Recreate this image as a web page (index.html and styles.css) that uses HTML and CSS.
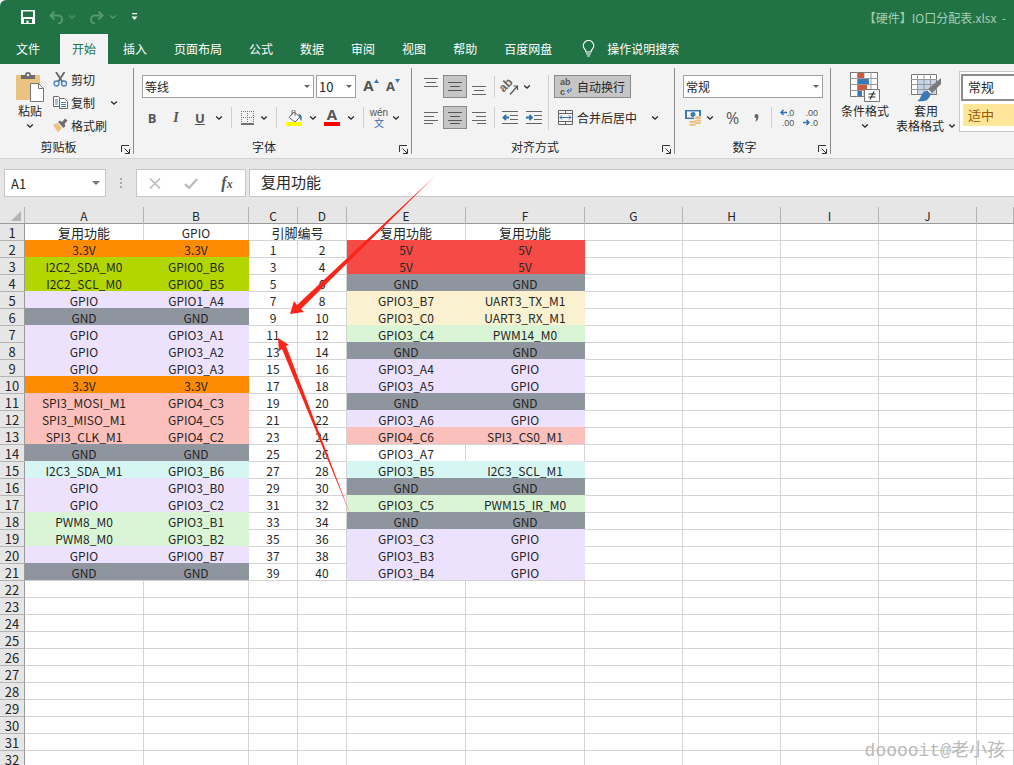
FILE: index.html
```html
<!DOCTYPE html>
<html lang="zh-CN">
<head>
    <meta charset="UTF-8">
    <meta name="viewport" content="width=device-width, initial-scale=1.0">
    <title>【硬件】IO口分配表.xlsx</title>
    <link rel="stylesheet" href="styles.css">
</head>
<body>
    <!-- Shared icons -->
    <svg class="defs" width="0" height="0">
        <symbol id="chev" viewBox="0 0 8 6"><path d="M1.2 1.5 4 4.2 6.800 1.500" fill="none" stroke="currentColor" stroke-width="1.300"/></symbol>
        <symbol id="launch" viewBox="0 0 9 9"><path d="M.5 7V.5H8M3.500 3.500 8 8M8.500 4v4.500H4" fill="none" stroke="#333"/></symbol>
    </svg>

    <header class="top">
        <div class="titlebar">
            <button class="qa" aria-label="保存"><svg width="14" height="14" viewBox="0 0 14 14"><path d="M0 0h14v14H0z" fill="#fff"/><path d="M2 1.500h10V7H2zM3 9h8v4H7.500v-2.500H5.500V13H3z" fill="#217346"/></svg></button>
            <button class="qa dim undo" aria-label="撤消"><svg width="14" height="13" viewBox="0 0 14 13"><path d="M5.500.5 1.500 4.500l4 4M1.500 4.500H9a4 4 0 0 1 0 8" fill="none" stroke="currentColor" stroke-width="2"/></svg><svg width="8" height="6"><use href="#chev"/></svg></button>
            <button class="qa dim" aria-label="恢复"><svg width="14" height="13" viewBox="0 0 14 13"><path d="M8.500.5l4 4-4 4M12.500 4.500H5a4 4 0 0 0 0 8" fill="none" stroke="currentColor" stroke-width="2"/></svg><svg width="8" height="6"><use href="#chev"/></svg></button>
            <button class="qa" aria-label="自定义"><svg width="7" height="8" viewBox="0 0 7 8"><path d="M1 0h5v1.200H1zM.5 3.500h6L3.500 7z" fill="#fff"/></svg></button>
            <span class="filename">【硬件】IO口分配表.xlsx&nbsp; -</span>
        </div>
        <nav class="tabs">
            <a href="#" class="file">文件</a>
            <a href="#" class="active">开始</a>
            <a href="#">插入</a>
            <a href="#">页面布局</a>
            <a href="#">公式</a>
            <a href="#">数据</a>
            <a href="#">审阅</a>
            <a href="#">视图</a>
            <a href="#">帮助</a>
            <a href="#">百度网盘</a>
            <a href="#" class="tell"><svg width="13" height="17" viewBox="0 0 13 17"><path d="M4 12c0-2.500-2.800-3.200-2.800-6.200a5.300 5.300 0 0 1 10.600 0C11.800 8.800 9 9.500 9 12zM4 14h5M5 16h3" fill="none" stroke="#fff" stroke-width="1.200"/></svg>操作说明搜索</a>
        </nav>
    </header>

    <div class="ribbon">
        <section class="group clipboard">
            <div class="body">
                <button class="big paste">
                    <svg width="28" height="30" viewBox="0 0 28 30"><path d="M0 3h24v25H0z" fill="#eac282"/><path d="M5 7V3h4a3 3 0 0 1 6 0h4v4z" fill="#6d6d6d"/><circle cx="12" cy="3" r="1.200" fill="#f3f3f3"/><path d="M14.500 11.500h8l5 5v13h-13z" fill="#fff" stroke="#777"/><path d="M22.500 11.500v5h5" fill="none" stroke="#777"/></svg>
                    <span>粘贴</span>
                    <svg width="8" height="6"><use href="#chev"/></svg>
                </button>
                <div class="list">
                    <button><svg width="15" height="15" viewBox="0 0 15 15"><path d="M3 0l6.500 10M11.500 0 5 10" stroke="#666" stroke-width="1.800"/><circle cx="3.500" cy="11.500" r="2.500" fill="none" stroke="#4b82bd" stroke-width="1.300"/><circle cx="11" cy="11.500" r="2.500" fill="none" stroke="#4b82bd" stroke-width="1.300"/></svg>剪切</button>
                    <button><svg width="15" height="15" viewBox="0 0 15 15"><path d="M.5 1.500h5l2 2v8h-7z" fill="#fff" stroke="#666"/><path d="M2 5h3M2 7h3M2 9h3" stroke="#4b82bd"/><path d="M6.500 3.500h5l3 3v7h-8z" fill="#fff" stroke="#666"/><path d="M8 7.500h5M8 9.500h5M8 11.500h5" stroke="#4b82bd"/></svg>复制<svg class="more" width="8" height="6"><use href="#chev"/></svg></button>
                    <button><svg width="15" height="15" viewBox="0 0 15 15"><path d="M0 7l4-2 5 5-4 4.500z" fill="#eac282"/><path d="M5 4l2-1.500 2 1.500L12 .5l2.500 2L11.500 6l1 2-2 2z" fill="#6d6d6d"/></svg>格式刷</button>
                </div>
            </div>
            <footer>剪贴板<button class="launch" aria-label="剪贴板设置"><svg width="9" height="9"><use href="#launch"/></svg></button></footer>
        </section>

        <section class="group font">
            <div class="body rows">
                <div class="row">
                    <span class="combo name"><select aria-label="字体"><option>等线</option></select></span>
                    <span class="combo size"><select aria-label="字号"><option>10</option></select></span>
                    <button class="ic grow" aria-label="增大字号"><span>A</span><svg width="5" height="4" viewBox="0 0 5 4"><path d="M0 4 2.500 0 5 4z" fill="#3c78b4"/></svg></button>
                    <button class="ic grow less" aria-label="减小字号"><span>A</span><svg width="5" height="4" viewBox="0 0 5 4"><path d="M0 0l2.500 4L5 0z" fill="#3c78b4"/></svg></button>
                </div>
                <div class="row">
                    <button class="ic"><b>B</b></button>
                    <button class="ic"><i>I</i></button>
                    <button class="ic"><u>U</u></button>
                    <button class="ch" aria-label="下划线"><svg width="8" height="6"><use href="#chev"/></svg></button>
                    <span class="sep"></span>
                    <button class="ic narrow" aria-label="边框"><svg width="13" height="14" viewBox="0 0 13 14"><path d="M.5 0v12M6.500 0v12M12.500 0v12M0 .5h13M0 6.500h13" stroke="#777" stroke-dasharray="1 1"/><path d="M0 13h13" stroke="#444" stroke-width="1.500"/></svg></button>
                    <button class="ch" aria-label="更多边框"><svg width="8" height="6"><use href="#chev"/></svg></button>
                    <span class="sep"></span>
                    <button class="ic" aria-label="填充颜色"><svg width="17" height="16" viewBox="0 0 17 16"><path d="M8 2l6 5-5 5-6-4.500z" fill="#fff" stroke="#666"/><path d="M6 5V1.500a1.500 1.500 0 0 1 3 0V6" fill="none" stroke="#666"/><path d="M12.500 4c3 0 4 3 2.800 7-1.500-1-1-3-2.300-4z" fill="#3c78b4"/><path d="M0 12h16v4H0z" fill="#ff0"/></svg></button>
                    <button class="ch" aria-label="更多填充"><svg width="8" height="6"><use href="#chev"/></svg></button>
                    <button class="ic color" aria-label="字体颜色">A</button>
                    <button class="ch" aria-label="更多颜色"><svg width="8" height="6"><use href="#chev"/></svg></button>
                    <span class="sep"></span>
                    <button class="ic narrow wen"><span>wén</span><em>文</em></button>
                    <button class="ch" aria-label="拼音"><svg width="8" height="6"><use href="#chev"/></svg></button>
                </div>
            </div>
            <footer>字体<button class="launch" aria-label="字体设置"><svg width="9" height="9"><use href="#launch"/></svg></button></footer>
        </section>

        <section class="group align">
            <div class="body">
                <div class="rows">
                    <div class="row">
                        <button class="ic" aria-label="顶端对齐"><svg width="14" height="18" viewBox="0 0 14 18"><path d="M0 .5h14M2 4.500h10M0 8.500h14" stroke="#666"/></svg></button>
                        <button class="ic on" aria-label="垂直居中"><svg width="14" height="10" viewBox="0 0 14 10"><path d="M0 .5h14M2 4.500h10M0 8.500h14" stroke="#555"/></svg></button>
                        <button class="ic" aria-label="底端对齐"><svg width="14" height="18" viewBox="0 0 14 18"><path d="M0 8.500h14M2 12.500h10M0 16.500h14" stroke="#666"/></svg></button>
                        <span class="sep slim"></span>
                        <button class="ic" aria-label="方向"><svg class="spill" width="17" height="16" viewBox="0 0 17 16"><text x="0" y="12" font-size="12" font-weight="bold" font-family="Liberation Sans" fill="#666" transform="rotate(-45 3 11)">ab</text><path d="M8 15.500 15.500 7M11.500 7h4v4" fill="none" stroke="#555" stroke-width="1.200"/></svg></button>
                        <button class="ch tight" aria-label="更多方向"><svg width="8" height="6"><use href="#chev"/></svg></button>
                    </div>
                    <div class="row">
                        <button class="ic" aria-label="左对齐"><svg width="14" height="12" viewBox="0 0 14 12"><path d="M0 .5h14M0 4.500h10M0 8.500h14M0 11.500h9" stroke="#666"/></svg></button>
                        <button class="ic on" aria-label="居中"><svg width="14" height="12" viewBox="0 0 14 12"><path d="M0 .5h14M2 4.500h10M0 8.500h14M2 11.500h10" stroke="#555"/></svg></button>
                        <button class="ic" aria-label="右对齐"><svg width="14" height="12" viewBox="0 0 14 12"><path d="M0 .5h14M4 4.500h10M0 8.500h14M5 11.500h9" stroke="#666"/></svg></button>
                        <span class="sep slim"></span>
                        <button class="ic" aria-label="减少缩进"><svg width="17" height="13" viewBox="0 0 17 13"><path d="M0 .5h16M8 4.500h8M8 8.500h8M0 12.500h16" stroke="#666"/><path d="M7 6.500H1.500M4 4 1.500 6.500 4 9" fill="none" stroke="#2f70b5" stroke-width="1.800"/></svg></button>
                        <button class="ic" aria-label="增加缩进"><svg width="17" height="13" viewBox="0 0 17 13"><path d="M0 .5h16M8 4.500h8M8 8.500h8M0 12.500h16" stroke="#666"/><path d="M0 6.500h5.500M3.500 4 6 6.500 3.500 9" fill="none" stroke="#2f70b5" stroke-width="1.800"/></svg></button>
                    </div>
                </div>
                <span class="sep tall"></span>
                <div class="rows">
                    <div class="row">
                        <button class="wide on"><svg class="spill" width="14" height="18" viewBox="0 0 14 18"><text x="1" y="7" font-size="9" font-weight="bold" font-family="Liberation Sans" fill="#555">ab</text><text x="1" y="17" font-size="9" font-weight="bold" font-family="Liberation Sans" fill="#555">c</text><path d="M12 10v3H8M10 11l-2 2 2 2" fill="none" stroke="#2f70b5"/></svg>自动换行</button>
                    </div>
                    <div class="row">
                        <button class="wide"><svg width="15" height="15" viewBox="0 0 15 15"><path d="M.5.5h14v14H.5zM0 3.500h15M0 11.500h15M7.500 0v4M7.500 11v4" fill="none" stroke="#666"/><path d="M2 7.500h11M4 5.500l-2 2 2 2M11 5.500l2 2-2 2" fill="none" stroke="#2f70b5"/></svg>合并后居中</button>
                        <button class="ch" aria-label="更多合并"><svg width="8" height="6"><use href="#chev"/></svg></button>
                    </div>
                </div>
            </div>
            <footer>对齐方式<button class="launch" aria-label="对齐设置"><svg width="9" height="9"><use href="#launch"/></svg></button></footer>
        </section>

        <section class="group number">
            <div class="body rows">
                <div class="row">
                    <span class="combo format"><select aria-label="数字格式"><option>常规</option></select></span>
                </div>
                <div class="row">
                    <button class="ic" aria-label="会计格式"><svg width="17" height="16" viewBox="0 0 17 16"><path d="M0 0h16v9H0z" fill="#3c78b4"/><path d="M2 1.500h12v6H2z" fill="#fff"/><circle cx="8" cy="4.500" r="2.500" fill="#3c78b4"/><path d="M3 9h6v7H3zM9 6h8v7H9z" fill="#f3f3f3"/><g fill="#eac282"><ellipse cx="13" cy="7.500" rx="3.500" ry="1.500"/><ellipse cx="13" cy="10.500" rx="3.500" ry="1"/><ellipse cx="13" cy="13" rx="3.500" ry="1"/><ellipse cx="7.500" cy="12" rx="3.500" ry="1.200"/><ellipse cx="7.500" cy="14.800" rx="3.500" ry="1.100"/></g></svg></button>
                    <button class="ch" aria-label="更多货币"><svg width="8" height="6"><use href="#chev"/></svg></button>
                    <button class="ic pct">%</button>
                    <button class="ic" aria-label="千位分隔"><svg width="5" height="8" viewBox="0 0 5 8"><path d="M.5 2a2 2 0 0 1 4 0C4.500 5 3.500 7 1 8c1-1.500 1.300-2.500 1-4C1 4 .5 3 .5 2z" fill="#666"/></svg></button>
                    <span class="sep slim"></span>
                    <button class="ic dec" aria-label="增加小数位"><span><svg width="7" height="7" viewBox="0 0 7 7"><path d="M7 3.500H1M3.500 1 1 3.500 3.500 6" fill="none" stroke="#2f70b5" stroke-width="1.500"/></svg>.0</span><span>.00</span></button>
                    <button class="ic dec" aria-label="减少小数位"><span>.00</span><span><svg width="7" height="7" viewBox="0 0 7 7"><path d="M0 3.500h6M3.500 1 6 3.500 3.500 6" fill="none" stroke="#2f70b5" stroke-width="1.500"/></svg>.0</span></button>
                </div>
            </div>
            <footer>数字<button class="launch" aria-label="数字设置"><svg width="9" height="9"><use href="#launch"/></svg></button></footer>
        </section>

        <section class="group styles">
            <button class="big">
                <svg width="30" height="30" viewBox="0 0 30 30"><path d="M.5.5h27v24H.5z" fill="#fff" stroke="#777"/><path d="M7.500 0v25M14 0v25M21 0v25M0 6.500h28M0 12.500h28M0 18.500h28" stroke="#999"/><path d="M8 1h6v5H8zM8 13h9v5H8z" fill="#d0583c"/><path d="M8 7h11v5H8zM8 19h4v5H8z" fill="#3c78b4"/><path d="M14.500 17.500h15v12h-15z" fill="#fff" stroke="#777"/><path d="M18.500 22h7M18.500 25h7M24 19.500l-4 8" stroke="#333" stroke-width="1.200"/></svg>
                <span>条件格式</span>
                <svg width="8" height="6"><use href="#chev"/></svg>
            </button>
            <button class="big wideb">
                <svg width="30" height="30" viewBox="0 0 30 30"><path d="M.5 2.500h25v20H.5z" fill="#fff" stroke="#777"/><path d="M7 8h18v14H7z" fill="#c5d3e8"/><path d="M6.500 2v20M13 2v20M19.500 2v20M0 7.500h26M0 12.500h26M0 17.500h26" stroke="#999"/><path d="M30 6v6L20 22l-4-4z" fill="#7b7b7b"/><path d="M15 19c3 0 5 2 4 5-2 5-7 6-13 5 4-1 4-9 9-10z" fill="#3c78b4"/><path d="M17 18l3 3" stroke="#fff" stroke-width="1.500"/></svg>
                <span>套用</span>
                <span>表格格式 <svg width="8" height="6"><use href="#chev"/></svg></span>
            </button>
            <div class="gallery">
                <button class="normal">常规</button>
                <button class="neutral">适中</button>
            </div>
        </section>
    </div>

    <div class="formula">
        <span class="combo cellname"><input type="text" value="A1" aria-label="名称框"></span>
        <svg class="dots" width="3" height="12" viewBox="0 0 3 12"><path d="M0 1h2v2H0zM0 5h2v2H0zM0 9h2v2H0z" fill="#aaa"/></svg>
        <div class="fxbox">
            <button aria-label="取消"><svg width="12" height="11" viewBox="0 0 12 11"><path d="M1 .5l10 10M11 .5l-10 10" stroke="#bbb" stroke-width="1.600"/></svg></button>
            <button aria-label="输入"><svg width="14" height="11" viewBox="0 0 14 11"><path d="M1 6l4 4L13 1" fill="none" stroke="#bbb" stroke-width="2.200"/></svg></button>
            <button class="fx"><i>f<small>x</small></i></button>
        </div>
        <input class="content" type="text" value="复用功能" aria-label="编辑栏">
    </div>

    <main class="sheet">
        <table id="grid">
            <colgroup>
                <col class="w-head"><col class="w-l"><col class="w-m"><col class="w-s"><col class="w-s"><col class="w-l"><col class="w-l">
                <col class="w-d"><col class="w-d"><col class="w-d"><col class="w-d"><col>
            </colgroup>
            <thead>
                <tr><th class="corner"><svg width="10" height="10" viewBox="0 0 10 10"><path d="M10 0v10H0z" fill="#b4b4b4"/></svg></th><th>A</th><th>B</th><th>C</th><th>D</th><th>E</th><th>F</th><th>G</th><th>H</th><th>I</th><th>J</th><th></th></tr>
            </thead>
            <tbody></tbody>
        </table>
    </main>

    <svg class="arrows" width="460" height="530" viewBox="0 0 460 530">
        <path d="M290 314l4-13 3 4L435 176 301 309l3 3zM278 338l11 7-3 1 65 170-69-167-3 2z" fill="#fb2418"/>
    </svg>
    <div class="watermark">dooooit@老小孩</div>

    <script>
        // [A, B, left fill, E, F, right fill] for rows 2 to 21
        const pins = [
            ["3.3V", "3.3V", "orange", "5V", "5V", "red"],
            ["I2C2_SDA_M0", "GPIO0_B6", "lime", "5V", "5V", "red"],
            ["I2C2_SCL_M0", "GPIO0_B5", "lime", "GND", "GND", "gray"],
            ["GPIO", "GPIO1_A4", "lilac", "GPIO3_B7", "UART3_TX_M1", "cream"],
            ["GND", "GND", "gray", "GPIO3_C0", "UART3_RX_M1", "cream"],
            ["GPIO", "GPIO3_A1", "lilac", "GPIO3_C4", "PWM14_M0", "green"],
            ["GPIO", "GPIO3_A2", "lilac", "GND", "GND", "gray"],
            ["GPIO", "GPIO3_A3", "lilac", "GPIO3_A4", "GPIO", "lilac"],
            ["3.3V", "3.3V", "orange", "GPIO3_A5", "GPIO", "lilac"],
            ["SPI3_MOSI_M1", "GPIO4_C3", "pink", "GND", "GND", "gray"],
            ["SPI3_MISO_M1", "GPIO4_C5", "pink", "GPIO3_A6", "GPIO", "lilac"],
            ["SPI3_CLK_M1", "GPIO4_C2", "pink", "GPIO4_C6", "SPI3_CS0_M1", "pink"],
            ["GND", "GND", "gray", "GPIO3_A7", "", ""],
            ["I2C3_SDA_M1", "GPIO3_B6", "aqua", "GPIO3_B5", "I2C3_SCL_M1", "aqua"],
            ["GPIO", "GPIO3_B0", "lilac", "GND", "GND", "gray"],
            ["GPIO", "GPIO3_C2", "lilac", "GPIO3_C5", "PWM15_IR_M0", "green"],
            ["PWM8_M0", "GPIO3_B1", "green", "GND", "GND", "gray"],
            ["PWM8_M0", "GPIO3_B2", "green", "GPIO3_C3", "GPIO", "lilac"],
            ["GPIO", "GPIO0_B7", "lilac", "GPIO3_B3", "GPIO", "lilac"],
            ["GND", "GND", "gray", "GPIO3_B4", "GPIO", "lilac"]
        ];

        const body = document.querySelector("#grid tbody");
        const blank = n => "<td></td>".repeat(n);
        let html = `<tr class="titles"><th>1</th><td>复用功能</td><td class="latin">GPIO</td><td colspan="2">引脚编号</td><td>复用功能</td><td>复用功能</td>${blank(5)}</tr>`;

        pins.forEach((p, i) => {
            html += `<tr><th>${i + 2}</th>
                <td class="${p[2]}">${p[0]}</td><td class="${p[2]}">${p[1]}</td>
                <td>${i * 2 + 1}</td><td>${i * 2 + 2}</td>
                <td class="${p[5]}">${p[3]}</td><td class="${p[5]}">${p[4]}</td>${blank(5)}</tr>`;
        });

        // Empty rows below the data
        for (let r = 22; r <= 32; r++) {
            html += `<tr><th>${r}</th>${blank(11)}</tr>`;
        }
        body.innerHTML = html;
    </script>
</body>
</html>
```
FILE: styles.css
```css
* {
    box-sizing: border-box;
}

body {
    margin: 0;
    height: 100vh;
    overflow: hidden;
    position: relative;
    background: #fff;
    color: #262626;
    font-family: "Noto Sans CJK SC", sans-serif;
    font-size: 12px;
}

button {
    display: flex;
    align-items: center;
    justify-content: center;
    margin: 0;
    padding: 0;
    border: 0;
    background: none;
    color: inherit;
    font: inherit;
    white-space: nowrap;
}

svg {
    flex: none;
    display: block;
}

.spill {
    overflow: visible;
}

.defs {
    position: absolute;
}

/* Title bar and tabs */
.top {
    background: #217346;
    border-top-left-radius: 6px;
}

.titlebar {
    display: flex;
    align-items: center;
    height: 34px;
    padding: 0 8px 0 21px;
    gap: 14px;
}

.qa {
    gap: 5px;
}

.qa.dim {
    color: #58986f;
}

.filename {
    margin-left: auto;
    color: #a3cfb3;
}

.tabs {
    display: flex;
    gap: 3px;
    height: 30px;
    padding-left: 4px;
}

.tabs a {
    display: flex;
    align-items: center;
    padding: 0 12px 2px;
    color: #fff;
    text-decoration: none;
    white-space: nowrap;
}

.tabs .file {
    margin-right: 5px;
}

.tabs .active {
    background: #f3f3f3;
    color: #217346;
}

.tabs .tell {
    gap: 12px;
    padding-left: 15px;
}

/* Ribbon */
.ribbon {
    display: flex;
    height: 95px;
    padding: 4px 0;
    overflow: hidden;
    background: #f3f3f3;
    border-bottom: 1px solid #d2d2d2;
}

.group {
    flex: none;
    display: flex;
    flex-direction: column;
    padding: 7px 7px 0;
    border-right: 1px solid #8c8c8c;
}

.group .body {
    display: flex;
}

.group .rows {
    display: flex;
    flex-direction: column;
    gap: 8px;
}

.row {
    display: flex;
    height: 23px;
    align-items: center;
}

.group footer {
    position: relative;
    margin-top: auto;
    line-height: 14px;
    text-align: center;
}

.launch {
    position: absolute;
    right: -4px;
    bottom: 0;
}

.group.clipboard {
    width: 134px;
    padding-top: 0;
}

.clipboard footer {
    padding-right: 16px;
}

.group.font {
    width: 278px;
    padding-left: 6px;
}

.font footer {
    padding-right: 16px;
}

.align {
    width: 263px;
}

.align footer {
    padding-right: 16px;
}

.number {
    width: 156px;
}

.number footer {
    padding-right: 16px;
}

.big {
    flex-direction: column;
    justify-content: flex-start;
    width: 56px;
    line-height: 16px;
}

.big span {
    display: flex;
    align-items: center;
    gap: 4px;
}

.big > svg + span {
    margin-top: 1px;
}

.big > span + svg {
    margin-top: 4px;
}

.paste {
    width: 46px;
    padding-top: 4px;
}

.list button {
    height: 23px;
    gap: 3px;
}

.more {
    margin-left: 12px;
}

.ic {
    width: 24px;
    height: 23px;
    color: #555;
}

.ic.narrow {
    width: 20px;
}

.ic b, .ic u {
    font: bold 13px "Open Sans", sans-serif;
}

.ic i {
    font: italic bold 14px "Liberation Serif", serif;
}

.on {
    background: #c6c6c6;
    border: 1px solid #8a8a8a;
}

.ch {
    width: 14px;
    height: 23px;
}

.ch.tight, .number .ch {
    width: 9px;
}

.sep {
    width: 1px;
    height: 21px;
    margin: 0 5px;
    background: #cfcfcf;
}

.sep.slim {
    margin: 0 3px;
}

.sep.tall {
    height: 55px;
    margin: 0 5px 0 2px;
}

.grow {
    align-items: flex-start;
    margin-left: 4px;
    font: bold 15px "Open Sans", sans-serif;
}

.grow svg {
    margin-top: 4px;
}

.grow + .grow {
    margin-left: 0;
}

.less {
    font-size: 13px;
    line-height: 22px;
}

.color {
    align-self: flex-start;
    width: 16px;
    height: 20px;
    margin: 0 4px;
    border-bottom: 4px solid #f00;
    font: bold 15px/16px "Open Sans", sans-serif;
}

.wen {
    flex-direction: column;
    font-family: "Liberation Sans", "Noto Sans CJK SC", sans-serif;
    font-size: 10px;
    line-height: 11px;
}

.wen em {
    color: #2f70b5;
    font-style: normal;
}

.wide {
    height: 23px;
    padding: 0 5px 0 4px;
    gap: 4px;
}

.wide + .ch {
    margin-left: 6px;
}

.pct {
    margin-left: 6px;
    font-family: "Open Sans", sans-serif;
    font-size: 16px;
}

.dec {
    flex-direction: column;
    align-items: flex-end;
    padding-right: 5px;
    font-family: "Liberation Sans", sans-serif;
    font-size: 9px;
    line-height: 10px;
}

.dec span {
    display: flex;
    align-items: center;
}

.combo {
    position: relative;
    flex: none;
}

.combo::after {
    content: "";
    position: absolute;
    top: 10px;
    right: 4px;
    border: 3px solid transparent;
    border-top-color: #666;
}

.combo select, .combo input {
    appearance: none;
    display: block;
    width: 100%;
    height: 23px;
    padding: 0 2px;
    border: 1px solid #a0a0a0;
    border-radius: 0;
    background: #fff;
    color: #262626;
    font: inherit;
}

.combo.name {
    width: 172px;
    margin: 0 2px;
}

.combo.size {
    width: 40px;
    font-size: 13px;
}

.combo.format {
    width: 140px;
    margin-left: 1px;
}

.group.styles {
    flex: 1;
    flex-direction: row;
    gap: 3px;
    padding: 3px 0 0 6px;
    border-right: 0;
}

.styles .big {
    padding-top: 1px;
}

.styles .wideb {
    width: 60px;
}

.wideb > span:last-child {
    line-height: 14px;
}

.gallery {
    flex: 1;
    height: 61px;
    padding: 2px 0 0 1px;
    background: #fff;
    border: 1px solid #c8c8c8;
    border-right: 0;
    font-size: 13px;
}

.gallery button {
    justify-content: flex-start;
    width: 100%;
    height: 27px;
    padding: 0 0 2px 5px;
}

.gallery .normal {
    border: 2px solid #8c8c8c;
    border-right: 0;
}

.gallery .neutral {
    height: 22px;
    margin: 3px 0 0 2px;
    background: #ffe699;
    color: #9c5700;
}

/* Formula bar */
.formula {
    display: flex;
    height: 48px;
    padding: 10px 0 10px 4px;
    background: #e6e6e6;
}

.cellname {
    width: 102px;
    font-size: 13px;
}

.cellname::after {
    top: 12px;
    right: 6px;
    border-width: 4px;
    border-top-color: #777;
}

.combo.cellname input {
    height: 28px;
    padding: 0 6px;
    border-color: #c6c6c6;
}

.dots {
    margin: 8px 13px 0 14px;
}

.fxbox {
    display: flex;
    width: 110px;
    background: #fff;
    border: 1px solid #c6c6c6;
}

.fxbox button {
    flex: 1;
}

.fx i {
    color: #555;
    font: italic bold 16px/16px "Liberation Serif", serif;
}

.fx small {
    font-size: 12px;
}

.content {
    flex: 1;
    min-width: 0;
    margin-left: 3px;
    padding: 0 11px 3px;
    border: 1px solid #c6c6c6;
    border-right: 0;
    color: #262626;
    font: inherit;
    font-size: 15px;
}

/* Sheet */
.sheet {
    overflow: hidden;
}

#grid {
    width: 100%;
    table-layout: fixed;
    border-collapse: separate;
    border-spacing: 0;
    font-size: 12px;
    line-height: 15px;
}

.w-head { width: 25px; }
.w-l { width: 119px; }
.w-m { width: 105px; }
.w-s { width: 49px; }
.w-d { width: 98px; }

#grid th, #grid td {
    height: 17px;
    padding: 1px 0 0;
    border-right: 1px solid #d4d4d4;
    border-top: 1px solid #d4d4d4;
    font-weight: normal;
    text-align: center;
    white-space: nowrap;
}

#grid th {
    background: #e6e6e6;
    border-color: #b4b4b4;
}

#grid thead th {
    height: 16px;
    border-top: 0;
}

#grid tbody th {
    border-right-color: #999;
    font-size: 13px;
}

#grid tbody tr:first-child > * {
    border-top-color: #999;
}

#grid .titles td {
    font-size: 13px;
}

#grid .titles .latin {
    font-size: 12px;
}

.corner svg {
    margin-left: 11px;
}

#grid .orange { background: #ff8c00; border-color: #ff8c00; }
#grid .red { background: #f54a45; border-color: #f54a45; }
#grid .lime { background: #b3d600; border-color: #b3d600; }
#grid .gray { background: #8f959e; border-color: #8f959e; }
#grid .lilac { background: #ece2fe; border-color: #ece2fe; }
#grid .cream { background: #faf1d1; border-color: #faf1d1; }
#grid .green { background: #d9f5d6; border-color: #d9f5d6; }
#grid .pink { background: #fbbfbc; border-color: #fbbfbc; }
#grid .aqua { background: #d5f6f2; border-color: #d5f6f2; }

/* Drawn over the sheet */
.arrows {
    position: absolute;
    top: 0;
    left: 0;
    pointer-events: none;
}

.watermark {
    position: absolute;
    right: 9px;
    bottom: 0;
    color: #b9b9b9;
    font: 18px/28px "Liberation Mono", "Noto Sans CJK SC", monospace;
}
```
